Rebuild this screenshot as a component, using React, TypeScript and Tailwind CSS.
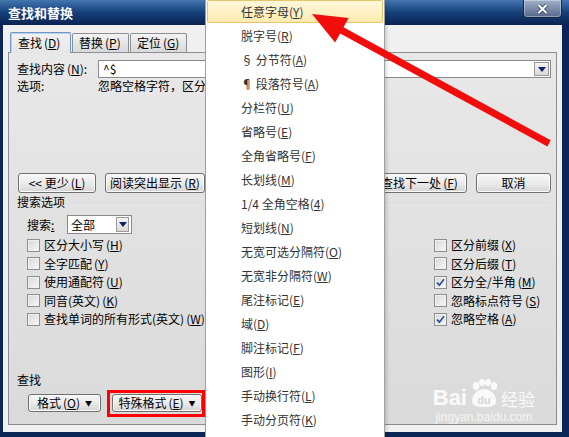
import React from "react";

function Acc({ k }: { k: string }) {
  return (
    <span className="ml-[2px]">
      (<span className="underline underline-offset-[1px]">{k}</span>)
    </span>
  );
}

function MAcc({ k }: { k: string }) {
  return (
    <>
      (<span className="underline underline-offset-[1px]">{k}</span>)
    </>
  );
}

function Btn({ children, className = "" }: { children: React.ReactNode; className?: string }) {
  return (
    <div
      className={
        "flex items-center justify-center rounded-[3px] border border-[#707070] bg-linear-to-b from-[#f7f7f7] via-[#ebebeb] to-[#d5d5d5] shadow-[inset_0_0_0_1px_#fbfbfb] text-[12px] leading-none whitespace-nowrap " +
        className
      }
    >
      {children}
    </div>
  );
}

function Cb({ checked = false }: { checked?: boolean }) {
  return (
    <div className="w-[13px] h-[13px] shrink-0 border border-[#8e8f8f] bg-linear-to-br from-[#d8d8d8] to-[#f8f8f8] shadow-[inset_0_0_0_1px_#efefef] flex items-center justify-center">
      {checked && (
        <svg width="9" height="9" viewBox="0 0 9 9">
          <path d="M1 4.6 L3.4 7.2 L8 1.2" stroke="#2d4f9c" strokeWidth="1.7" fill="none" />
        </svg>
      )}
    </div>
  );
}

function DropArrow() {
  return (
    <svg width="8" height="5" viewBox="0 0 8 5">
      <path d="M0 0 H8 L4 5 Z" fill="#0e1f6b" />
    </svg>
  );
}

function CbRow({ checked, children }: { checked?: boolean; children: React.ReactNode }) {
  return (
    <div className="h-[18.5px] flex items-center gap-[4px] whitespace-nowrap">
      <Cb checked={checked} />
      <span>{children}</span>
    </div>
  );
}

const menuItems: { label: string; k: string }[] = [
  { label: "任意字母", k: "Y" },
  { label: "脱字号", k: "R" },
  { label: "§ 分节符", k: "A" },
  { label: "¶ 段落符号", k: "A" },
  { label: "分栏符", k: "U" },
  { label: "省略号", k: "E" },
  { label: "全角省略号", k: "F" },
  { label: "长划线", k: "M" },
  { label: "1/4 全角空格", k: "4" },
  { label: "短划线", k: "N" },
  { label: "无宽可选分隔符", k: "O" },
  { label: "无宽非分隔符", k: "W" },
  { label: "尾注标记", k: "E" },
  { label: "域", k: "D" },
  { label: "脚注标记", k: "F" },
  { label: "图形", k: "I" },
  { label: "手动换行符", k: "L" },
  { label: "手动分页符", k: "K" },
];

export default function App() {
  const T = [312, 14];
  const d = [0.878, 0.479];
  const n = [-0.479, 0.878];
  const L = 34, W = 14, S = 3.5, len = 270;
  const B = [T[0] + L * d[0], T[1] + L * d[1]];
  const E = [T[0] + len * d[0], T[1] + len * d[1]];
  const pts = [
    T,
    [B[0] + W * n[0], B[1] + W * n[1]],
    [B[0] + S * n[0], B[1] + S * n[1]],
    [E[0] + S * n[0], E[1] + S * n[1]],
    [E[0] - S * n[0], E[1] - S * n[1]],
    [B[0] - S * n[0], B[1] - S * n[1]],
    [B[0] - W * n[0], B[1] - W * n[1]],
  ]
    .map((p) => p.map((v) => v.toFixed(1)).join(","))
    .join(" ");

  return (
    <div className="relative w-[569px] h-[437px] overflow-hidden bg-[#0b2656] font-['Noto_Sans_CJK_SC',sans-serif] text-[12px] text-black leading-none">
      {/* title bar */}
      <div className="h-[25px] flex items-start pl-[8px] bg-linear-to-b from-[#4476b0] via-[#16407a] to-[#0a2352]">
        <span className="mt-[5px] text-white font-bold text-[13px] leading-[16px]">查找和替换</span>
        <div className="ml-auto mr-[7px] w-[39px] h-[18px] rounded-b-[4px] border border-t-0 border-[#17284a] bg-linear-to-b from-[#a3b1c8] via-[#7b8cab] to-[#56688a] shadow-[inset_0_0_0_1px_rgba(255,255,255,0.35)] flex items-center justify-center">
          <svg width="11" height="10" viewBox="0 0 11 10">
            <path d="M1.5 1 L9.5 9 M9.5 1 L1.5 9" stroke="#243454" strokeWidth="3.6" />
            <path d="M1.5 1 L9.5 9 M9.5 1 L1.5 9" stroke="#ffffff" strokeWidth="2.2" />
          </svg>
        </div>
      </div>

      {/* body */}
      <div className="ml-[3px] w-[559px] h-[407px] bg-[#f0f0f0] pl-[5px] pt-[7px]">
        {/* tabs */}
        <div className="flex items-end h-[20px] pl-[2px]">
          <div className="relative z-10 w-[61px] h-[21px] -mb-[1px] border border-b-0 border-[#6e98c8] bg-linear-to-b from-[#f2f2f2] to-[#e6e6e6] rounded-t-[2px] flex items-center pl-[7px] shadow-[inset_1px_1px_0_#b9d3ee]">
            查找<Acc k="D" />
          </div>
          <div className="ml-[1px] w-[57px] h-[19px] border border-b-0 border-[#8c8e94] bg-linear-to-b from-[#f3f3f3] to-[#d9d9d9] rounded-t-[2px] flex items-center pl-[6px]">
            替换<Acc k="P" />
          </div>
          <div className="ml-[1px] w-[57px] h-[19px] border border-b-0 border-[#8c8e94] bg-linear-to-b from-[#f3f3f3] to-[#d9d9d9] rounded-t-[2px] flex items-center pl-[6px]">
            定位<Acc k="G" />
          </div>
        </div>

        {/* panel */}
        <div className="w-[549px] h-[373px] border border-[#8a8d94] bg-linear-to-b from-[#e8e8e8] to-[#dadada] pl-[8px] pr-[5px] pt-[7px] flex flex-col">
          <div className="flex items-center h-[18px]">
            <div className="w-[81px] whitespace-nowrap">
              查找内容<Acc k="N" />:
            </div>
            <div className="w-[453px] h-[18px] bg-white border border-[#8a8a8a] flex items-center pl-[4px] pr-[1px]">
              <span>^$</span>
              <div className="ml-auto w-[15px] h-[14px] border border-[#9a9a9a] bg-linear-to-b from-[#f4f4f4] to-[#d8d8d8] flex items-center justify-center">
                <DropArrow />
              </div>
            </div>
          </div>
          <div className="flex items-center h-[16px]">
            <div className="w-[81px]">选项:</div>
            <div className="whitespace-nowrap">忽略空格字符，区分全/半角</div>
          </div>

          {/* buttons row */}
          <div className="mt-[79px] flex items-center h-[20px]">
            <Btn className="ml-[1px] w-[78px] h-[20px]">
              &lt;&lt; 更少<Acc k="L" />
            </Btn>
            <Btn className="ml-[9px] w-[100px] h-[20px]">
              阅读突出显示<Acc k="R" />
            </Btn>
            <Btn className="ml-auto w-[95px] h-[20px]">
              查找下一处<Acc k="F" />
            </Btn>
            <Btn className="ml-[9px] w-[75px] h-[20px]">取消</Btn>
          </div>

          {/* search options header */}
          <div className="flex items-center h-[18px]">
            <span>搜索选项</span>
            <div className="flex-1 ml-[6px] h-px bg-[#d4dde6]" />
          </div>

          {/* search select */}
          <div className="mt-[4px] flex items-center h-[19px] pl-[10px]">
            <span className="w-[40px]">
              搜索<span className="underline">:</span>
            </span>
            <div className="w-[65px] h-[19px] bg-white border border-[#8a8a8a] flex items-center pl-[3px] pr-[2px]">
              <span>全部</span>
              <div className="ml-auto w-[13px] h-[15px] border border-[#9a9a9a] bg-linear-to-b from-[#f4f4f4] to-[#d8d8d8] flex items-center justify-center">
                <DropArrow />
              </div>
            </div>
          </div>

          {/* checkbox columns */}
          <div className="mt-[2px] flex pl-[10px]">
            <div className="flex flex-col">
              <CbRow>区分大小写<Acc k="H" /></CbRow>
              <CbRow>全字匹配<Acc k="Y" /></CbRow>
              <CbRow>使用通配符<Acc k="U" /></CbRow>
              <CbRow>同音(英文)<Acc k="K" /></CbRow>
              <CbRow>查找单词的所有形式(英文)<Acc k="W" /></CbRow>
            </div>
            <div className="ml-auto w-[117px] flex flex-col">
              <CbRow>区分前缀<Acc k="X" /></CbRow>
              <CbRow>区分后缀<Acc k="T" /></CbRow>
              <CbRow checked>区分全/半角<Acc k="M" /></CbRow>
              <CbRow>忽略标点符号<Acc k="S" /></CbRow>
              <CbRow checked>忽略空格<Acc k="A" /></CbRow>
            </div>
          </div>

          {/* find section */}
          <div className="mt-[44px] h-[14px] flex items-center">查找</div>
          <div className="mt-[3px] flex items-center h-[27px]">
            <Btn className="ml-[11px] w-[73px] h-[18px]">
              格式<Acc k="O" />
              <span className="ml-[5px] text-[7px]">▼</span>
            </Btn>
            <div className="ml-[6px] w-[98px] h-[27px] border-[3px] border-[#ff0000] flex items-center justify-end">
              <Btn className="w-[90px] h-[18px]">
                特殊格式<Acc k="E" />
                <span className="ml-[5px] text-[7px]">▼</span>
              </Btn>
            </div>
          </div>

          {/* watermark */}
          <div className="relative flex-1">
            <div className="absolute right-[16px] bottom-[1px] flex flex-col items-center text-white/85">
              <div className="flex items-end">
                <span className="font-['Liberation_Sans',sans-serif] font-bold text-[22px] leading-[20px]">Bai</span>
                <svg width="32" height="29" viewBox="0 0 32 29" className="mx-[1px]">
                  <ellipse cx="8" cy="7" rx="3.2" ry="4" fill="#ffffff" fillOpacity="0.85" />
                  <ellipse cx="14" cy="3.5" rx="3" ry="3.5" fill="#ffffff" fillOpacity="0.85" />
                  <ellipse cx="20" cy="3.5" rx="3" ry="3.5" fill="#ffffff" fillOpacity="0.85" />
                  <ellipse cx="26" cy="7" rx="3.2" ry="4" fill="#ffffff" fillOpacity="0.85" />
                  <path d="M4 22 C4 14 11 10 16 10 C21 10 28 14 28 22 C28 27 23 28 16 28 C9 28 4 27 4 22 Z" fill="#ffffff" fillOpacity="0.85" />
                  <text x="16" y="25" textAnchor="middle" fontSize="11" fontWeight="bold" fontFamily="Liberation Sans, sans-serif" fill="#d6d6d6">du</text>
                </svg>
                <span className="text-[17px] leading-[18px]">经验</span>
              </div>
              <span className="mt-[3px] font-['Liberation_Sans',sans-serif] text-[12px] leading-[12px] text-white/75">jingyan.baidu.com</span>
            </div>
          </div>
        </div>
      </div>

      {/* dropdown menu overlay */}
      <div className="absolute left-[205px] top-0 w-[180px] h-[437px] bg-white border-x border-[#a0a0a0] shadow-[2px_2px_3px_rgba(0,0,0,0.15)] flex flex-col text-[#333] text-[12px]">
        {menuItems.map((it, i) => (
          <div key={i} className="h-[24px] shrink-0 relative flex items-center pl-[35px] whitespace-nowrap">
            {i === 0 && (
              <div className="absolute left-[1px] right-[1px] top-0 h-[23px] rounded-[2px] border border-[#e6c46a] bg-linear-to-b from-[#fff7d9] to-[#fdebb0]" />
            )}
            <span className="relative">
              {it.label}
              <MAcc k={it.k} />
            </span>
          </div>
        ))}
      </div>

      {/* red arrow */}
      <svg className="absolute left-0 top-0 pointer-events-none" width="569" height="437" viewBox="0 0 569 437">
        <polygon points={pts} fill="#f20d0d" />
      </svg>
    </div>
  );
}
